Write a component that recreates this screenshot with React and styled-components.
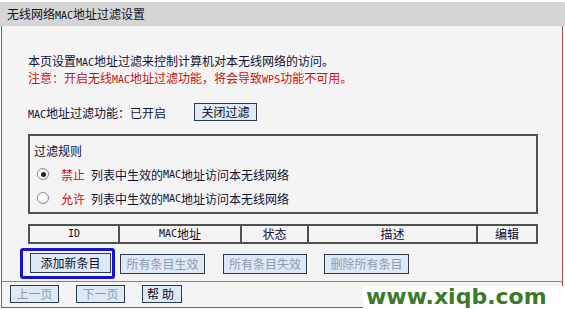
import React from 'react';
import styled, { createGlobalStyle } from 'styled-components';

const GlobalStyle = createGlobalStyle`
  html, body {
    margin: 0;
    padding: 0;
    background: #ffffff;
  }
  body {
    font-family: "Noto Sans CJK SC", "Liberation Sans", sans-serif;
    font-size: 12px;
    color: #111133;
  }
`;

const Page = styled.div`
  position: relative;
  width: 565px;
  height: 309px;
  overflow: hidden;
  background: #fff;
`;

const TitleBar = styled.div`
  margin-top: 2px;
  height: 24px;
  line-height: 24px;
  padding-left: 7px;
  background: #d5d5d5;
  color: #111122;
`;

const Panel = styled.div`
  margin-left: 1px;
  width: 562px;
  box-sizing: border-box;
  border: 1px solid #a94a44;
  border-top: none;
  background: #f5f4f4;
`;

const Content = styled.div`
  padding: 26px 0 2px 26px;
  display: flex;
  flex-direction: column;
  align-items: flex-start;
`;

const Line = styled.div`
  height: 17px;
  line-height: 17px;
  color: ${(p) => (p.$warn ? '#cc1111' : '#111133')};
  white-space: nowrap;
`;

const Lat = styled.span`
  font-family: "DejaVu Sans Mono", monospace;
  font-size: 10px;
`;

const StatusRow = styled.div`
  margin-top: 17px;
  display: flex;
  align-items: center;
  height: 18px;
  gap: 28px;
`;

const Button = styled.button`
  box-sizing: border-box;
  width: ${(p) => p.$w}px;
  height: ${(p) => p.$h || 18}px;
  padding: 0;
  border: 1px solid #2b3b4e;
  border-radius: 0;
  background: #dde9f5;
  font-family: "Noto Sans CJK SC", sans-serif;
  font-size: 12px;
  line-height: 1;
  color: ${(p) => (p.disabled ? '#8d9cae' : '#0d0d2a')};
  letter-spacing: ${(p) => p.$ls || 0}px;
  cursor: default;
`;

const RuleBox = styled.div`
  margin-top: 13px;
  width: 510px;
  height: 80px;
  box-sizing: border-box;
  border: 2px solid #505050;
  padding: 6px 0 2px 4px;
  display: flex;
  flex-direction: column;
`;

const RuleTitle = styled.div`
  height: 18px;
  line-height: 18px;
  margin-bottom: 2px;
`;

const RadioRow = styled.label`
  display: flex;
  align-items: center;
  height: 24px;
  padding-left: 3px;
  white-space: nowrap;
`;

const Radio = styled.span`
  position: relative;
  width: 12px;
  height: 12px;
  box-sizing: border-box;
  border-radius: 50%;
  border: 1px solid #8a8a8a;
  background: radial-gradient(circle at 40% 35%, #ffffff 40%, #e6e6e6 100%);
  margin-right: 12px;

  &::after {
    content: '';
    display: ${(p) => (p.$on ? 'block' : 'none')};
    position: absolute;
    left: 2.5px;
    top: 2.5px;
    width: 5px;
    height: 5px;
    border-radius: 50%;
    background: #222;
  }
`;

const RedWord = styled.span`
  color: #cc1111;
  margin-right: 6px;
`;

const Table = styled.div`
  margin-top: 10px;
  width: 510px;
  height: 20px;
  box-sizing: border-box;
  border: 2px solid #505050;
  display: grid;
  grid-template-columns: 88px 122px 67px 169px 1fr;
`;

const HeadCell = styled.div`
  display: flex;
  align-items: center;
  justify-content: center;
  border-left: ${(p) => (p.$first ? 'none' : '2px solid #505050')};
  line-height: 16px;
  color: #0d0d2a;
`;

const ButtonRow = styled.div`
  margin-top: 4px;
  margin-left: -8px;
  display: flex;
  align-items: center;
  height: 31px;
`;

const Highlight = styled.span`
  display: inline-flex;
  box-sizing: border-box;
  height: 31px;
  border: 3px solid #1414cc;
  border-radius: 3px;
  padding: 2px 1px 3px 7px;
  margin-right: 5px;
`;

const Spaced = styled.span`
  margin-left: ${(p) => p.$ml}px;
  display: inline-flex;
`;

const Divider = styled.div`
  height: 1px;
  background: #c46a64;
`;

const BottomBar = styled.div`
  display: flex;
  align-items: center;
  gap: 17px;
  padding: 3px 0 4px 8px;
  height: 18px;
`;

const Watermark = styled.div`
  position: absolute;
  right: 0;
  bottom: 0;
  width: 202px;
  height: 23px;
  background: #fff;
  padding-left: 3px;
  box-sizing: border-box;
  font-family: "DejaVu Sans", Verdana, sans-serif;
  font-weight: bold;
  font-size: 22px;
  line-height: 22px;
  color: #3b7a2c;
  white-space: nowrap;
`;

export default function App() {
  return (
    <Page>
      <GlobalStyle />
      <TitleBar>无线网络<Lat>MAC</Lat>地址过滤设置</TitleBar>
      <Panel>
        <Content>
          <Line>本页设置<Lat>MAC</Lat>地址过滤来控制计算机对本无线网络的访问。</Line>
          <Line $warn>注意：开启无线<Lat>MAC</Lat>地址过滤功能，将会导致<Lat>WPS</Lat>功能不可用。</Line>
          <StatusRow>
            <span><Lat>MAC</Lat>地址过滤功能：已开启</span>
            <Button $w={63}>关闭过滤</Button>
          </StatusRow>
          <RuleBox>
            <RuleTitle>过滤规则</RuleTitle>
            <RadioRow>
              <Radio $on />
              <RedWord>禁止</RedWord>
              列表中生效的<Lat>MAC</Lat>地址访问本无线网络
            </RadioRow>
            <RadioRow>
              <Radio />
              <RedWord>允许</RedWord>
              列表中生效的<Lat>MAC</Lat>地址访问本无线网络
            </RadioRow>
          </RuleBox>
          <Table>
            <HeadCell $first><Lat>ID</Lat></HeadCell>
            <HeadCell><Lat>MAC</Lat>地址</HeadCell>
            <HeadCell>状态</HeadCell>
            <HeadCell>描述</HeadCell>
            <HeadCell>编辑</HeadCell>
          </Table>
          <ButtonRow>
            <Highlight>
              <Button $w={81} $h={20}>添加新条目</Button>
            </Highlight>
            <Button $w={85} $h={20} disabled>所有条目生效</Button>
            <Spaced $ml={18}>
              <Button $w={84} $h={20} disabled>所有条目失效</Button>
            </Spaced>
            <Spaced $ml={17}>
              <Button $w={85} $h={20} disabled>删除所有条目</Button>
            </Spaced>
          </ButtonRow>
        </Content>
        <Divider />
        <BottomBar>
          <Button $w={49} disabled>上一页</Button>
          <Button $w={49} disabled>下一页</Button>
          <Button $w={40} $ls={3}>帮助</Button>
        </BottomBar>
      </Panel>
      <Watermark>www.xiqb.com</Watermark>
    </Page>
  );
}
